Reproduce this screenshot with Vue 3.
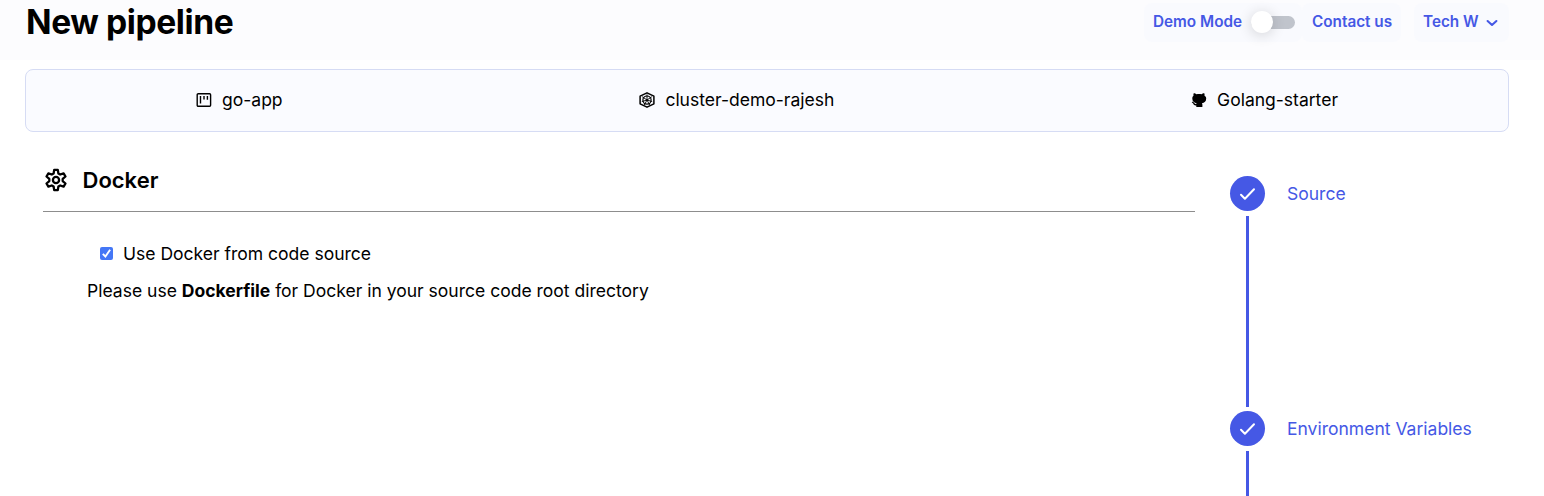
<script setup>
const steps = ['Source', 'Environment Variables']
</script>

<template>
  <div class="page">
    <header class="topbar">
      <h1>New pipeline</h1>
      <nav class="actions">
        <div class="pill demo">
          <span>Demo Mode</span>
          <span class="switch"><i class="track"></i><i class="knob"></i></span>
        </div>
        <div class="pill contact"><span>Contact us</span></div>
        <div class="pill account">
          <span>Tech W</span>
          <svg width="12" height="8" viewBox="0 0 12 8" fill="none" stroke="currentColor" stroke-width="2.1" stroke-linecap="round" stroke-linejoin="round"><path d="M1.6 2 6 6l4.4-4" /></svg>
        </div>
      </nav>
    </header>

    <section class="summary">
      <div class="item">
        <svg width="16" height="16" viewBox="0 0 16 16" fill="none" stroke="#000"><rect x="1.2" y="1.7" width="13.4" height="12.6" rx="1" stroke-width="1.4" /><path d="M4.5 4v7.4M8 4v3.4M11.4 4v3.8" stroke-width="1.4" /></svg>
        <span>go-app</span>
      </div>
      <div class="item">
        <svg width="16" height="16" viewBox="0 0 16 16" fill="none" stroke="#000" stroke-linejoin="round">
          <path d="M8 .8 14.9 4.2V11.8L8 15.2 1.1 11.8V4.2Z" stroke-width="1.5" />
          <circle cx="8" cy="8.1" r="4.1" stroke-width="1.2" />
          <path d="M8 2.4v4.7M8 8l4.9-3.3M8 8l5.2 1.6M8 8l2.7 5M8 8l-2.7 5M8 8 2.8 9.6M8 8 3.1 4.7" stroke-width=".9" />
          <circle cx="8" cy="8" r="1" fill="#000" stroke="none" />
        </svg>
        <span>cluster-demo-rajesh</span>
      </div>
      <div class="item">
        <svg width="16" height="16" viewBox="0 0 16 16"><path fill="#000" d="M2.7 1.2C3.7 1.1 4.8 1.7 5.6 2.2 7.1 1.8 8.9 1.8 10.4 2.2 11.2 1.7 12.3 1.1 13.3 1.2 13.7 2.2 13.7 3 13.5 3.8 14.5 4.4 15.2 5.2 15.2 6.6 15.2 9.7 13.5 10.9 10.9 11.3 11.3 11.9 11.4 12.4 11.4 13.1V14.7Q11.4 15.1 10.8 15.1H5.8Q5.3 15.1 5.3 14.7V13.4C3.5 13.7 2.8 12.8 2.3 11.8 1.9 11.1 1.5 10.8.8 10.4L1.1 9.8C2.2 9.7 2.9 10.4 3.5 11.3 4 12 4.5 12.1 5.4 11.8L5.7 11.3C3.2 10.9 1.3 9.7 1.3 6.6 1.3 5.2 1.8 4.4 2.5 3.8 2.3 3 2.3 2.2 2.7 1.2Z" /></svg>
        <span>Golang-starter</span>
      </div>
    </section>

    <main class="content">
      <section class="docker">
        <div class="heading">
          <svg width="26" height="26" viewBox="0 0 26 26" fill="none" stroke="#000" stroke-width="2.3" stroke-linejoin="round"><path d="M11.2 2.9H14.8L15.4 6.5 17.2 7.5 20.6 6.3 22.5 9.5 19.7 11.9V14.1L22.5 16.5 20.6 19.7 17.2 18.5 15.4 19.5 14.8 23.1H11.2L10.6 19.5 8.8 18.5 5.4 19.7 3.5 16.5 6.3 14.1V11.9L3.5 9.5 5.4 6.3 8.8 7.5 10.6 6.5Z" /><circle cx="13" cy="13" r="3.1" /></svg>
          <h2>Docker</h2>
        </div>
        <label class="option">
          <span class="box"><svg width="13" height="13" viewBox="0 0 13 13" fill="none" stroke="#fff" stroke-width="1.9"><path d="m2.8 6.8 2.6 2.7 4.7-6.7" /></svg></span>
          <span>Use Docker from code source</span>
        </label>
        <p class="hint">Please use <b>Dockerfile</b> for Docker in your source code root directory</p>
      </section>

      <aside class="steps">
        <div v-for="step in steps" :key="step" class="step">
          <div class="rail">
            <span class="dot"><svg width="17" height="14" viewBox="0 0 17 14" fill="none" stroke="#fff" stroke-width="2" stroke-linecap="round" stroke-linejoin="round"><path d="m2 7.8 3.9 3.9L15 2.2" /></svg></span>
            <span class="line"></span>
          </div>
          <span class="name">{{ step }}</span>
        </div>
      </aside>
    </main>
  </div>
</template>

<style>
body { background: #fff; }
</style>

<style scoped>
.page { height: 496px; overflow: hidden; font-family: Inter, "Liberation Sans", sans-serif; color: #000; font-size: 17.52px; }
.page * { box-sizing: border-box; }
.topbar { height: 60px; padding: 0 35px 0 26px; background: #fcfcfe; display: flex; justify-content: space-between; align-items: flex-start; }
h1 { margin: 2px 0 0; font-size: 33.6px; line-height: 40px; font-weight: 700; letter-spacing: -.4px; }
.actions { display: flex; margin-top: 3px; color: #4558e5; font-size: 15.3px; font-weight: 600; }
.pill { height: 39px; border-radius: 8px; background: #f9fafe; display: flex; align-items: center; white-space: nowrap; line-height: 20px; }
.pill > span:first-child { margin-top: -2px; }
.demo { width: 158px; padding-left: 9px; justify-content: space-between; padding-right: 7px; }
.contact { width: 99px; padding-left: 10px; }
.account { width: 95px; margin-left: 13px; padding: 0 11px 0 9px; justify-content: space-between; }
.pill > .switch { position: relative; width: 44px; height: 22px; margin-top: -1px; display: flex; align-items: center; }
.track { width: 44px; height: 13px; border-radius: 7px; background: #c0c4cc; }
.knob { position: absolute; left: 0; top: 0; width: 22px; height: 22px; border-radius: 50%; background: #fff; box-shadow: 0 2px 14px rgba(0, 0, 0, .16); }
.summary { height: 63px; margin: 9px 35px 0 25px; padding: 0 170px 1px 170px; border: 1px solid #d6dcf4; border-radius: 8px; background: #fafbff; display: flex; justify-content: space-between; align-items: center; }
.item { display: flex; align-items: center; gap: 10px; white-space: nowrap; line-height: 24px; }
.item > span { margin-top: -1px; }
.content { display: flex; padding-left: 43px; }
.docker { width: 1152px; }
.heading { height: 80px; padding: 17px 0 0; border-bottom: 1px solid #8d8d8d; display: flex; gap: 13.5px; }
.heading svg { margin-top: 18px; }
h2 { margin: 17px 0 0; font-size: 22px; line-height: 28px; font-weight: 600; }
.option { margin: 29px 0 0 57px; height: 24px; display: flex; align-items: center; gap: 10px; }
.box { width: 13px; height: 13px; border-radius: 2px; background: #4477f6; display: flex; }
.hint { margin: 14px 0 0 44px; line-height: 24px; }
.steps { margin: 44px 0 0 35px; }
.step { height: 235px; display: flex; gap: 22px; color: #4558e5; }
.rail { width: 35px; display: flex; flex-direction: column; align-items: center; }
.dot { width: 35px; height: 35px; border-radius: 50%; background: #4558e5; display: flex; align-items: center; justify-content: center; }
.line { width: 3px; height: 191px; margin-top: 5px; background: #4558e5; }
.name { line-height: 36px; white-space: nowrap; }
</style>
